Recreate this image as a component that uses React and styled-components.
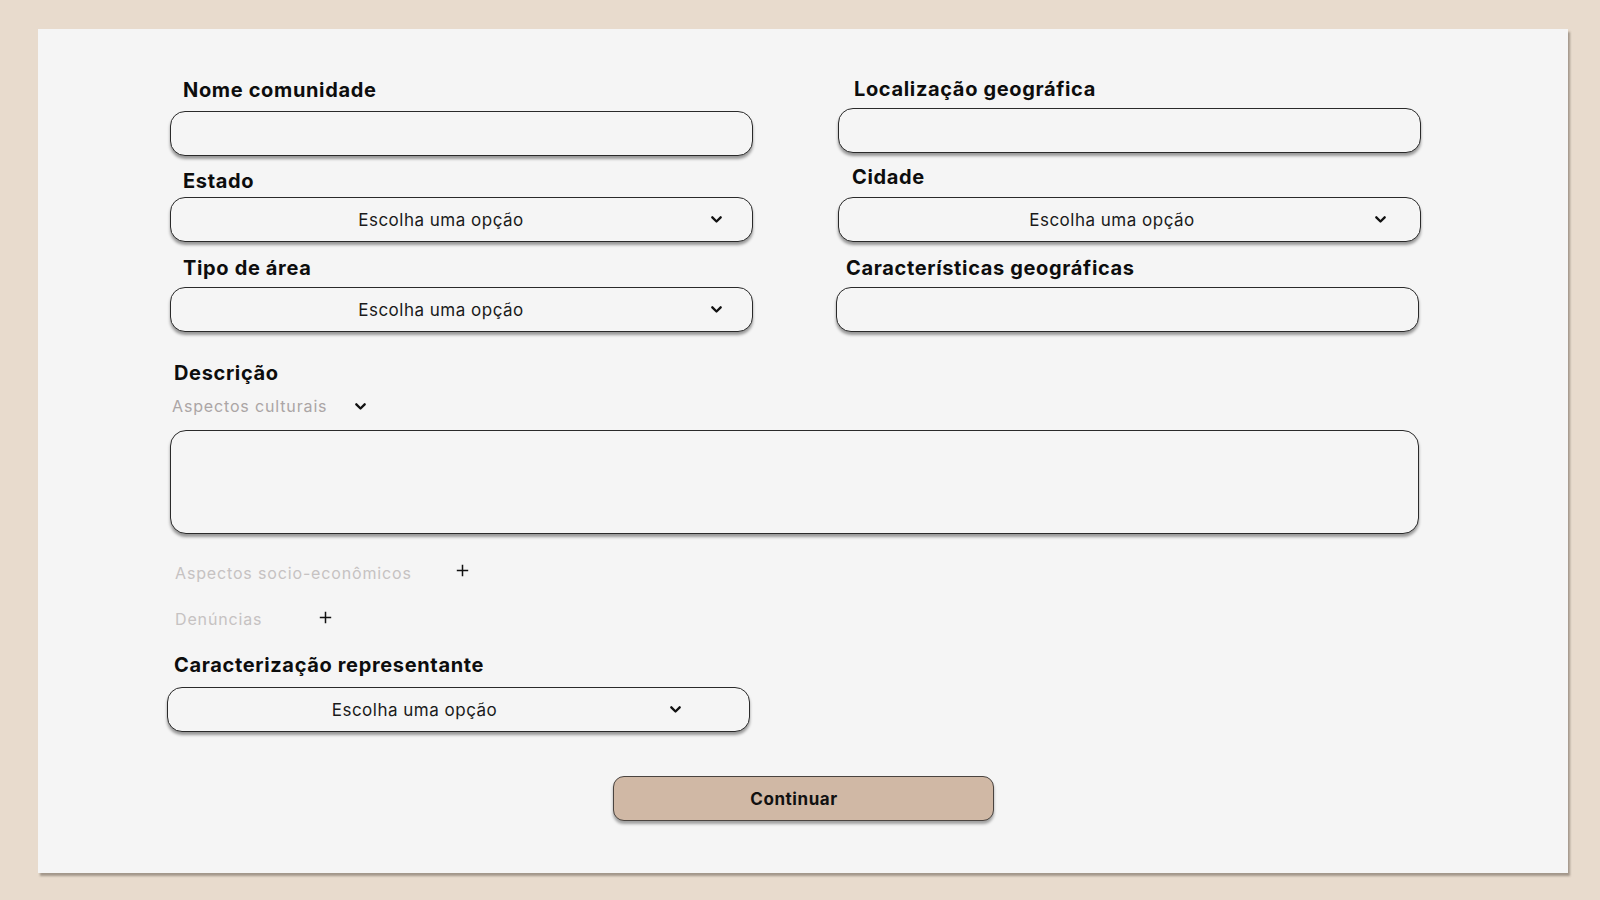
import React from "react";
import styled, { createGlobalStyle } from "styled-components";

const GlobalStyle = createGlobalStyle`
  html, body {
    margin: 0;
    padding: 0;
    background: #e8dbcd;
  }
  * { box-sizing: border-box; }
  body {
    font-family: "Inter", "Liberation Sans", sans-serif;
    color: #111;
  }
`;

const Page = styled.div`
  width: 1600px;
  height: 900px;
  padding: 29px 32px 27px 38px;
  display: flex;
`;

const Card = styled.main`
  flex: 1;
  background: #f5f5f5;
  box-shadow: 2px 3px 2px rgba(80, 70, 60, 0.45);
  padding: 47px 0 50px 132px;
  display: flex;
  flex-direction: column;
`;

const Columns = styled.div`
  display: grid;
  grid-template-columns: 583px 583px;
  column-gap: 85px;
`;

const Column = styled.div`
  display: flex;
  flex-direction: column;
`;

const Label = styled.label`
  display: block;
  font-family: "Inter", "Liberation Sans", sans-serif;
  font-weight: 700;
  font-size: 20px;
  line-height: 24px;
  height: 24px;
  letter-spacing: 0.65px;
  color: #0d0d0d;
  margin-top: ${(p) => p.$mt || 0}px;
  padding-left: ${(p) => p.$indent || 0}px;
  white-space: nowrap;
`;

const TextInput = styled.input`
  display: block;
  width: 100%;
  height: 45px;
  margin-top: ${(p) => p.$mt || 0}px;
  margin-left: ${(p) => p.$ml || 0}px;
  border: 1px solid #2a2a2a;
  border-radius: 15px;
  background: #f5f5f5;
  box-shadow: 0 3px 3px rgba(0, 0, 0, 0.38);
  outline: none;
  padding: 0 16px;
  font-family: "Inter", sans-serif;
  font-size: 16px;
`;

const Select = styled.div`
  display: flex;
  align-items: center;
  width: ${(p) => p.$width || "100%"};
  height: 45px;
  margin-top: ${(p) => p.$mt || 0}px;
  margin-left: ${(p) => p.$ml || 0}px;
  padding-right: ${(p) => p.$pr || 30}px;
  border: 1px solid #2a2a2a;
  border-radius: 15px;
  background: #f5f5f5;
  box-shadow: 0 3px 3px rgba(0, 0, 0, 0.38);
  cursor: pointer;
`;

const SelectText = styled.span`
  flex: 1;
  text-align: center;
  font-family: "Inter", sans-serif;
  font-size: 17px;
  font-weight: 400;
  letter-spacing: 0.5px;
  color: #1a1a1a;
  padding-left: ${(p) => Math.max(p.$shift || 0, 0)}px;
  padding-right: ${(p) => Math.max(-(p.$shift || 0), 0)}px;
`;

const Chevron = ({ size = 11 }) => (
  <svg width={size} height={size * 0.65} viewBox="0 0 10 6.5" fill="none">
    <path
      d="M1.2 1.2 L5 5 L8.8 1.2"
      stroke="#111"
      strokeWidth="2.1"
      strokeLinecap="round"
      strokeLinejoin="round"
    />
  </svg>
);

const Plus = () => (
  <svg width="13" height="13" viewBox="0 0 13 13" fill="none">
    <path d="M6.5 0.8 V12.2 M0.8 6.5 H12.2" stroke="#111" strokeWidth="1.5" />
  </svg>
);

const Section = styled.section`
  display: flex;
  flex-direction: column;
  margin-top: ${(p) => p.$mt || 0}px;
`;

const ToggleRow = styled.div`
  display: flex;
  align-items: center;
  height: 24px;
  margin-top: ${(p) => p.$mt || 0}px;
  padding-left: ${(p) => p.$indent || 0}px;
  gap: ${(p) => p.$gap || 30}px;
`;

const ToggleText = styled.span`
  font-family: "Inter", sans-serif;
  font-size: 16px;
  line-height: 24px;
  letter-spacing: 0.85px;
  color: ${(p) => p.$color || "#aca6a6"};
`;

const IconSlot = styled.span`
  display: inline-flex;
  align-items: center;
  transform: translateY(${(p) => p.$dy || 0}px);
`;

const TextArea = styled.textarea`
  display: block;
  width: 1249px;
  height: 104px;
  margin-top: ${(p) => p.$mt || 0}px;
  border: 1px solid #2a2a2a;
  border-radius: 16px;
  background: #f5f5f5;
  box-shadow: 0 3px 3px rgba(0, 0, 0, 0.38);
  resize: none;
  outline: none;
  padding: 12px 16px;
  font-family: "Inter", sans-serif;
  font-size: 16px;
`;

const ButtonRow = styled.div`
  display: flex;
  justify-content: center;
  margin-top: ${(p) => p.$mt || 0}px;
  margin-left: -132px;
`;

const Button = styled.button`
  width: 381px;
  height: 45px;
  border: 1px solid #4a4440;
  border-radius: 11px;
  background: #d0b8a5;
  box-shadow: 0 3px 3px rgba(0, 0, 0, 0.35);
  font-family: "Inter", sans-serif;
  font-weight: 700;
  font-size: 17px;
  letter-spacing: 0.55px;
  color: #111;
  cursor: pointer;
  padding: 0 18px 0 0;
`;

const SelectField = ({ mt, pr, width, ml, shift }) => (
  <Select $mt={mt} $pr={pr} $width={width} $ml={ml}>
    <SelectText $shift={shift}>Escolha uma opção</SelectText>
    <Chevron />
  </Select>
);

export default function App() {
  return (
    <>
      <GlobalStyle />
      <Page>
        <Card>
          <Columns>
            <Column>
              <Label $mt={2} $indent={13}>Nome comunidade</Label>
              <TextInput $mt={9} />
              <Label $mt={13} $indent={13}>Estado</Label>
              <SelectField mt={4} pr={30} />
              <Label $mt={14} $indent={13}>Tipo de área</Label>
              <SelectField mt={7} pr={30} />
            </Column>
            <Column>
              <Label $mt={1} $indent={16}>Localização geográfica</Label>
              <TextInput $mt={7} />
              <Label $mt={12} $indent={14}>Cidade</Label>
              <SelectField mt={8} pr={34} shift={10} />
              <Label $mt={14} $indent={8}>Características geográficas</Label>
              <TextInput $mt={7} $ml={-2} />
            </Column>
          </Columns>

          <Section $mt={29}>
            <Label $indent={4}>Descrição</Label>
            <ToggleRow $mt={9} $indent={2} $gap={28}>
              <ToggleText $color="#aba5a5">Aspectos culturais</ToggleText>
              <IconSlot $dy={1}>
                <Chevron size={11} />
              </IconSlot>
            </ToggleRow>
            <TextArea $mt={12} />
            <ToggleRow $mt={27} $indent={5} $gap={44}>
              <ToggleText $color="#c6c2c2">Aspectos socio-econômicos</ToggleText>
              <IconSlot $dy={-3}>
                <Plus />
              </IconSlot>
            </ToggleRow>
            <ToggleRow $mt={22} $indent={5} $gap={57}>
              <ToggleText $color="#c6c2c2">Denúncias</ToggleText>
              <IconSlot $dy={-2}>
                <Plus />
              </IconSlot>
            </ToggleRow>
            <Label $mt={22} $indent={4}>Caracterização representante</Label>
            <SelectField mt={10} pr={68} width="583px" ml={-3} shift={-9} />
          </Section>

          <ButtonRow $mt={44}>
            <Button>Continuar</Button>
          </ButtonRow>
        </Card>
      </Page>
    </>
  );
}
